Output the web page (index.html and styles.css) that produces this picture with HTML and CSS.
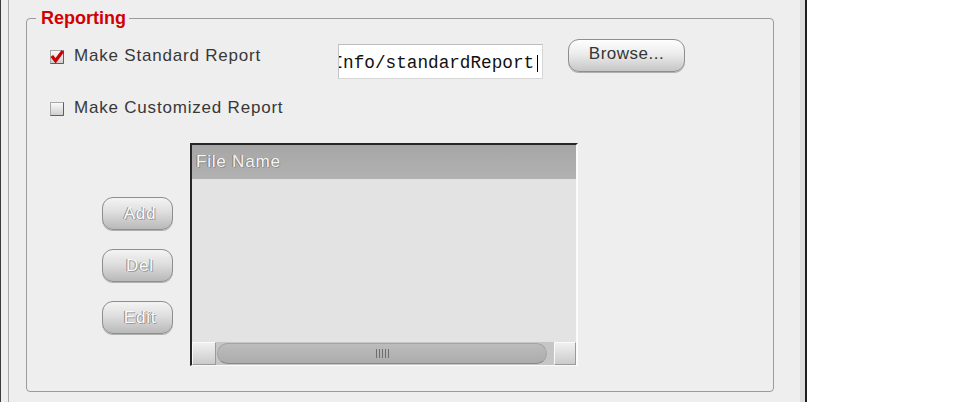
FILE: index.html
```html
<!DOCTYPE html>
<html>
<head>
<meta charset="utf-8">
<title>Reporting</title>
<link rel="stylesheet" href="styles.css">
</head>
<body>
<div class="panel">
  <div class="inner">
    <fieldset class="group">
      <legend>Reporting</legend>
      <div class="row row-std">
        <label class="check">
          <span class="box">
            <svg width="14" height="14" viewBox="0 0 14 14">
              <defs><linearGradient id="cb1" x1="0" y1="0" x2="0" y2="1"><stop offset="0" stop-color="#fbfbfb"/><stop offset="1" stop-color="#cdcdcd"/></linearGradient></defs>
              <rect x="0.5" y="0.5" width="13" height="13" fill="url(#cb1)" stroke="#a8a8a8"/>
              <path d="M0.5 13.5H13.5V0.5" fill="none" stroke="#5e5e5e"/>
              <path d="M1.8 6L5.6 10.8L12.8 1" fill="none" stroke="#cc0000" stroke-width="3.2"/>
            </svg>
          </span>
          <span class="lbl">Make Standard Report</span>
        </label>
        <div class="field"><span class="field-text">Info/standardReport</span><span class="caret"></span></div>
        <button class="btn browse">Browse...</button>
      </div>
      <div class="row row-custom">
        <label class="check">
          <span class="box">
            <svg width="14" height="14" viewBox="0 0 14 14">
              <defs><linearGradient id="cb2" x1="0" y1="0" x2="0" y2="1"><stop offset="0" stop-color="#fbfbfb"/><stop offset="1" stop-color="#cdcdcd"/></linearGradient></defs>
              <rect x="0.5" y="0.5" width="13" height="13" fill="url(#cb2)" stroke="#a8a8a8"/>
              <path d="M0.5 13.5H13.5V0.5" fill="none" stroke="#5e5e5e"/>
            </svg>
          </span>
          <span class="lbl">Make Customized Report</span>
        </label>
      </div>
      <div class="row row-list">
        <div class="side-btns">
          <button class="btn off">Add</button>
          <button class="btn off">Del</button>
          <button class="btn off">Edit</button>
        </div>
        <div class="list">
          <div class="list-head">File Name</div>
          <div class="list-body"></div>
          <div class="hscroll">
            <span class="sb-btn sb-left"></span>
            <span class="sb-track"><span class="sb-thumb"><span class="grip"></span></span></span>
            <span class="sb-btn sb-right"></span>
          </div>
        </div>
      </div>
    </fieldset>
  </div>
</div>
</body>
</html>
```

FILE: styles.css
```css
* { box-sizing: border-box; }
html, body { margin: 0; background: #ffffff; }
body { font-family: "Liberation Sans", Arial, sans-serif; }

.panel {
  width: 807px;
  height: 402px;
  display: flex;
  background: #eeeeee;
  border-left: 1px solid #3c3c3c;
  border-right: 2px solid #1e1e1e;
  padding-left: 7px;
}
.inner {
  flex: 1;
  border-left: 1px solid #a8a8a8;
  border-right: 5px solid #dcdcdc;
  padding: 9px 0 0 17px;
}
.group {
  width: 748px;
  margin: 0;
  padding: 0 0 25px 0;
  border: 1px solid #9b9b9b;
  border-radius: 4px;
  min-inline-size: 0;
}
.group legend {
  margin-left: 9px;
  padding: 0 3px 0 5px;
  font-size: 18px;
  font-weight: bold;
  line-height: 19px;
  color: #d20000;
}
.row { display: flex; align-items: flex-start; }
.row-std { margin-top: 11px; padding-left: 23px; height: 40px; }
.row-custom { margin-top: 18px; padding-left: 23px; height: 21px; }
.row-list { margin-top: 25px; }

.check {
  display: flex;
  align-items: center;
  height: 20px;
  font-size: 17px;
  line-height: 20px;
  letter-spacing: 0.8px;
  color: #383838;
  white-space: nowrap;
}
.row-std .check { width: 288px; margin-top: 7px; }
.row-custom .check { margin-top: 1px; }
.box { width: 14px; height: 14px; margin-top: 2px; margin-right: 10px; flex: none; }
.box svg { display: block; overflow: visible; }

.field {
  width: 205px;
  height: 35px;
  margin-top: 5px;
  background: #ffffff;
  border: 1px solid #d6d6d6;
  border-top-color: #bdbdbd;
  border-left-color: #c4c4c4;
  overflow: hidden;
  white-space: nowrap;
  font-family: "Liberation Mono", "Courier New", monospace;
  font-size: 17.7px;
  line-height: 30px;
  padding-top: 3px;
  text-indent: -6.5px;
  color: #111111;
}
.caret {
  display: inline-block;
  width: 1px;
  height: 17px;
  background: #000000;
  vertical-align: -4px;
  margin-left: 3px;
}

.btn {
  font-family: "Liberation Sans", Arial, sans-serif;
  font-size: 17px;
  letter-spacing: 0.5px;
  border: 1px solid #8e8e8e;
  border-radius: 11px;
  background: linear-gradient(#fefefe, #ececec 45%, #c6c6c6);
  box-shadow: 0 1px 0 #b0b0b0;
  color: #353535;
  padding: 0;
}
.browse { width: 117px; height: 33px; margin-left: 25px; padding-bottom: 3px; }

.side-btns {
  display: flex;
  flex-direction: column;
  gap: 19px;
  margin-left: 75px;
  padding-top: 54px;
  width: 71px;
}
.btn.off {
  width: 71px;
  height: 33px;
  padding-left: 5px;
  letter-spacing: 0.8px;
  color: #fafafa;
  text-shadow: -1px 0 0 #8a8a8a, 1px 1px 0 #9e9e9e;
  background: linear-gradient(#f4f4f4, #dedede 45%, #b9b9b9);
}

.list {
  width: 388px;
  height: 223px;
  margin-left: 17px;
  display: flex;
  flex-direction: column;
  border-top: 2px solid #262626;
  border-left: 2px solid #262626;
  border-right: 2px solid #fafafa;
  border-bottom: 1px solid #fafafa;
  background: #e3e3e3;
}
.list-head {
  height: 34px;
  flex: none;
  padding-left: 4px;
  font-size: 17px;
  line-height: 34px;
  letter-spacing: 0.8px;
  color: #f4f4f4;
  text-shadow: -1px 0 0 #7c7c7c, 1px 1px 0 #929292;
  background: linear-gradient(#a6a6a6, #b2b2b2);
}
.list-body { flex: 1; }
.hscroll { height: 23px; flex: none; display: flex; }
.sb-btn {
  flex: none;
  background: linear-gradient(#f0f0f0, #cbcbcb);
  border: 1px solid;
  border-color: #fafafa #9a9a9a #9a9a9a #fafafa;
}
.sb-left { width: 24px; }
.sb-right { width: 22px; }
.sb-track {
  flex: 1;
  display: flex;
  background: #c6c6c6;
  padding: 1px 7px 1px 1px;
}
.sb-thumb {
  flex: 1;
  display: flex;
  align-items: center;
  justify-content: center;
  border-radius: 11px;
  background: linear-gradient(#bcbcbc, #acacac);
  border: 1px solid #a4a4a4;
  border-bottom-color: #888888;
}
.grip {
  width: 13px;
  height: 9px;
  background: repeating-linear-gradient(90deg, #6e6e6e 0 1px, transparent 1px 3px);
}
```
